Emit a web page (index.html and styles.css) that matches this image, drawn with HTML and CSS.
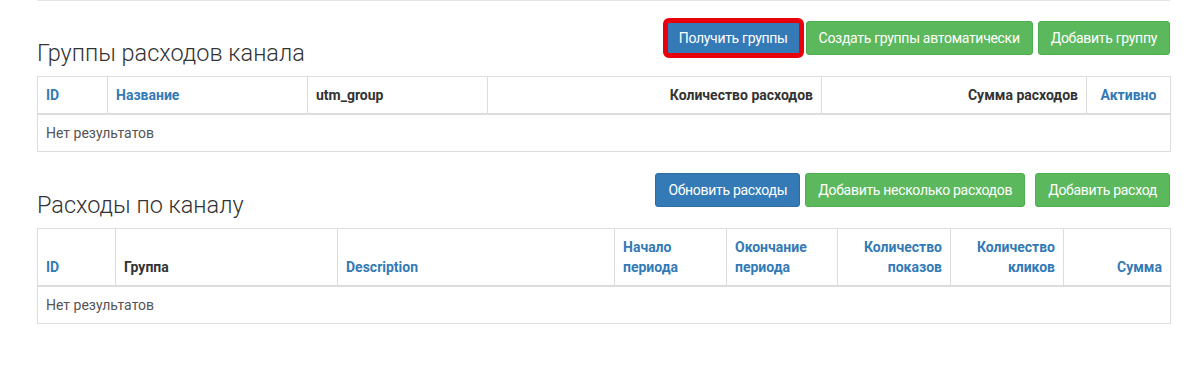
FILE: index.html
```html
<!DOCTYPE html>
<html>
<head>
    <meta charset="utf-8">
    <title>Расходы канала</title>
    <link rel="stylesheet" href="styles.css">
</head>
<body>
    <div class="container">
        <hr class="divider">

        <div class="section-head">
            <h3 class="section-title">Группы расходов канала</h3>
            <div class="button-container">
                <button class="button button-primary button-marked">Получить группы</button>
                <button class="button button-success">Создать группы автоматически</button>
                <button class="button button-success">Добавить группу</button>
            </div>
        </div>

        <table class="grid groups-table">
            <colgroup>
                <col class="g-id">
                <col class="g-name">
                <col class="g-utm">
                <col class="g-count">
                <col class="g-sum">
                <col class="g-active">
            </colgroup>
            <tr>
                <th><a href="#">ID</a></th>
                <th><a href="#">Название</a></th>
                <th>utm_group</th>
                <th class="right">Количество расходов</th>
                <th class="right">Сумма расходов</th>
                <th class="center"><a href="#">Активно</a></th>
            </tr>
            <tr>
                <td colspan="6" class="empty">Нет результатов</td>
            </tr>
        </table>

        <div class="section-head">
            <h3 class="section-title">Расходы по каналу</h3>
            <div class="button-container">
                <button class="button button-primary">Обновить расходы</button>
                <button class="button button-success">Добавить несколько расходов</button>
                <button class="button button-success button-spaced">Добавить расход</button>
            </div>
        </div>

        <table class="grid costs-table">
            <colgroup>
                <col class="c-id">
                <col class="c-group">
                <col class="c-desc">
                <col class="c-start">
                <col class="c-end">
                <col class="c-shows">
                <col class="c-clicks">
                <col class="c-sum">
            </colgroup>
            <tr>
                <th><a href="#">ID</a></th>
                <th>Группа</th>
                <th><a href="#">Description</a></th>
                <th><a href="#">Начало периода</a></th>
                <th><a href="#">Окончание периода</a></th>
                <th class="right"><a href="#">Количество показов</a></th>
                <th class="right"><a href="#">Количество кликов</a></th>
                <th class="right"><a href="#">Сумма</a></th>
            </tr>
            <tr>
                <td colspan="8" class="empty">Нет результатов</td>
            </tr>
        </table>
    </div>
</body>
</html>
```

FILE: styles.css
```css
* {
    box-sizing: border-box;
}

body {
    margin: 0;
    font-family: Roboto, "Liberation Sans", sans-serif;
    font-size: 14px;
    line-height: 20px;
    color: #333;
    background-color: #fff;
}

a {
    color: #337ab7;
    text-decoration: none;
}

.container {
    width: 1133px;
    margin-left: 37px;
}

.divider {
    margin: 0;
    border: 0;
    border-top: 1px solid #e5e5e5;
}

.section-head {
    display: flex;
    justify-content: space-between;
    align-items: flex-start;
    padding-top: 20px;
    margin-bottom: 10px;
}

.section-title {
    margin: 19px 0 0;
    font-size: 23.5px;
    line-height: 26px;
    font-weight: 300;
    color: #333;
}

.button-container {
    display: flex;
    gap: 5px;
}

.button {
    padding: 6px 12px;
    font-family: inherit;
    font-size: 14px;
    line-height: 20px;
    letter-spacing: -0.3px;
    color: #fff;
    border: 1px solid transparent;
    border-radius: 3px;
    cursor: pointer;
}

.button-primary {
    background-color: #337ab7;
    border-color: #2e6da4;
}

.button-success {
    background-color: #5cb85c;
    border-color: #4cae4c;
}

.button-spaced {
    margin-left: 5px;
}

.button-marked {
    outline: 5px solid #e8000b;
    outline-offset: -2px;
    border-radius: 3px;
}

.grid {
    width: 100%;
    table-layout: fixed;
    border-collapse: collapse;
    border: 1px solid #ddd;
    margin-bottom: 1px;
}

.grid th, .grid td {
    padding: 8px;
    border: 1px solid #ddd;
    text-align: left;
    vertical-align: bottom;
}

.grid th {
    font-weight: bold;
    border-bottom: 2px solid #ddd;
}

.grid th.right {
    text-align: right;
}

.grid th.center {
    text-align: center;
}

.grid td.empty {
    color: #555;
    font-size: 14px;
}

.g-id { width: 70px; }
.g-name { width: 200px; }
.g-utm { width: 180px; }
.g-count { width: 334px; }
.g-sum { width: 265px; }
.g-active { width: 84px; }

.c-id { width: 78px; }
.c-group { width: 222px; }
.c-desc { width: 277px; }
.c-start { width: 112px; }
.c-end { width: 111px; }
.c-shows { width: 113px; }
.c-clicks { width: 113px; }
.c-sum { width: 107px; }
```
